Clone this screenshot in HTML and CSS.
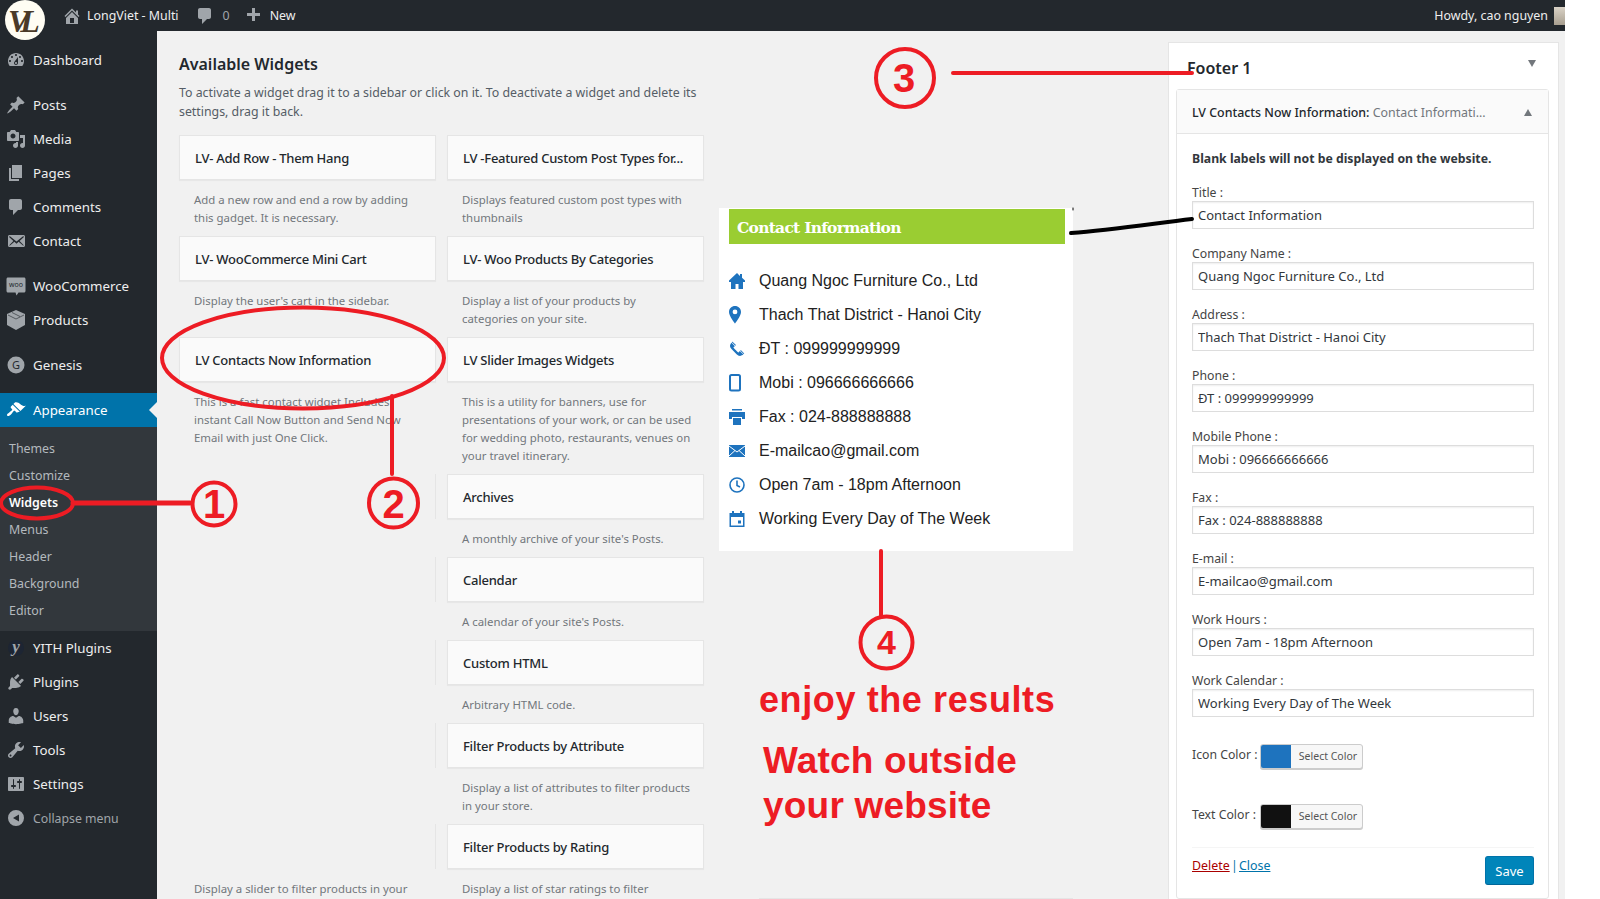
FILE: index.html
```html
<!DOCTYPE html>
<html lang="en">
<head>
    <meta charset="UTF-8">
    <meta name="viewport" content="width=device-width, initial-scale=1.0">
    <title>Widgets - LongViet - Multi</title>
    <link rel="stylesheet" href="styles.css">
</head>
<body>
<div class="page">
    <!-- top admin bar -->
    <header class="adminbar">
        <div class="bar-left">
            <a class="bar-item site-name">
                <svg class="bar-icon" viewBox="0 0 20 20"><path fill-rule="evenodd" d="M16 8.5l1.53 1.53-1.06 1.06L10 4.62l-6.47 6.47-1.06-1.06L10 2.5l4 4v-2h2v4zm-6-2.46l6 5.99V18H4v-5.97zM12 17v-5H8v5h4z"/></svg>
                LongViet - Multi
            </a>
            <a class="bar-item comments-count">
                <svg class="bar-icon" viewBox="0 0 20 20"><path d="M5 2h9c1.1 0 2 .9 2 2v7c0 1.1-.9 2-2 2h-2l-5 5v-5H5c-1.1 0-2-.9-2-2V4c0-1.1.9-2 2-2z"/></svg>
                <span>0</span>
            </a>
            <a class="bar-item new-item">
                <svg class="bar-icon" viewBox="0 0 20 20"><path d="M17 7v3h-5v5H9v-5H4V7h5V2h3v5h5z"/></svg>
                New
            </a>
        </div>
        <div class="bar-right">
            <span>Howdy, cao nguyen</span>
            <span class="avatar"></span>
        </div>
    </header>

    <div class="layout">
        <!-- left menu -->
        <nav class="sidemenu">
            <a class="menu-item"><svg class="menu-icon" viewBox="0 0 20 20"><path fill-rule="evenodd" d="M3.76 16h12.48c1.1-1.37 1.76-3.11 1.76-5 0-4.42-3.58-8-8-8s-8 3.58-8 8c0 1.89.66 3.63 1.76 5zM10 4c.55 0 1 .45 1 1s-.45 1-1 1-1-.45-1-1 .45-1 1-1zM6 6c.55 0 1 .45 1 1s-.45 1-1 1-1-.45-1-1 .45-1 1-1zm8 0c.55 0 1 .45 1 1s-.45 1-1 1-1-.45-1-1 .45-1 1-1zm-5.37 5.55L12 7v6c0 1.1-.9 2-2 2s-2-.9-2-2c0-.57.24-1.08.63-1.45zM4 10c.55 0 1 .45 1 1s-.45 1-1 1-1-.45-1-1 .45-1 1-1zm12 0c.55 0 1 .45 1 1s-.45 1-1 1-1-.45-1-1 .45-1 1-1zm-5 3c0-.55-.45-1-1-1s-1 .45-1 1 .45 1 1 1 1-.45 1-1z"/></svg>Dashboard</a>

            <div class="menu-sep"></div>
            <a class="menu-item"><svg class="menu-icon" viewBox="0 0 20 20"><path d="M10.44 3.02l1.82-1.82 6.36 6.35-1.83 1.82c-1.05-.68-2.48-.57-3.41.36l-.75.75c-.92.93-1.04 2.35-.35 3.41l-1.83 1.82-2.41-2.41-2.8 2.79c-.42.42-3.38 2.71-3.8 2.29s1.86-3.39 2.28-3.81l2.79-2.79L4.1 9.36l1.83-1.82c1.05.69 2.48.57 3.4-.36l.75-.75c.93-.92 1.05-2.35.36-3.41z"/></svg>Posts</a>
            <a class="menu-item"><svg class="menu-icon" viewBox="0 0 20 20"><path fill-rule="evenodd" d="M13 11V4c0-.55-.45-1-1-1h-1.67L9 1H5L3.67 3H2c-.55 0-1 .45-1 1v7c0 .55.45 1 1 1h10c.55 0 1-.45 1-1zM7 4.5c1.38 0 2.5 1.12 2.5 2.5S8.38 9.5 7 9.5 4.5 8.38 4.5 7 5.62 4.5 7 4.5zM14 6h5v10.5c0 1.38-1.12 2.5-2.5 2.5S14 17.88 14 16.5s1.12-2.5 2.5-2.5c.17 0 .34.02.5.05V9h-3V6zm-4 8.05V13h2v3.5c0 1.38-1.12 2.5-2.5 2.5S7 17.88 7 16.5 8.12 14 9.5 14c.17 0 .34.02.5.05z"/></svg>Media</a>
            <a class="menu-item"><svg class="menu-icon" viewBox="0 0 20 20"><path d="M6 15V2h10v13H6zm-1 1h8v2H3V5h2v11z"/></svg>Pages</a>
            <a class="menu-item"><svg class="menu-icon" viewBox="0 0 20 20"><path d="M5 2h9c1.1 0 2 .9 2 2v7c0 1.1-.9 2-2 2h-2l-5 5v-5H5c-1.1 0-2-.9-2-2V4c0-1.1.9-2 2-2z"/></svg>Comments</a>
            <a class="menu-item"><svg class="menu-icon" viewBox="0 0 20 20"><path fill-rule="evenodd" d="M19 14.5v-9c0-.83-.67-1.5-1.5-1.5H3.49c-.83 0-1.5.67-1.5 1.5v9c0 .83.67 1.5 1.5 1.5H17.5c.83 0 1.5-.67 1.5-1.5zm-1.31-9.11c.33.33.15.67-.03.84L13.6 9.95l3.9 4.06c.12.14.2.36.06.51-.13.16-.43.15-.56.05l-4.37-3.73-2.14 1.95-2.13-1.95-4.37 3.73c-.13.1-.43.11-.56-.05-.14-.15-.06-.37.06-.51l3.9-4.06-4.06-3.72c-.18-.17-.36-.51-.03-.84s.67-.17.95.07l6.24 5.04 6.25-5.04c.28-.24.62-.4.95-.07z"/></svg>Contact</a>

            <div class="menu-sep"></div>
            <a class="menu-item"><svg class="menu-icon" viewBox="0 0 20 20"><path d="M2 1.5h16c.8 0 1.5.7 1.5 1.5v12c0 .8-.7 1.500-1.500 1.500h-5.500l-2 3-1-3H2c-.8 0-1.500-.7-1.500-1.500V3c0-.8.7-1.500 1.500-1.500z"/><text class="woo-mark" x="10" y="11">woo</text></svg>WooCommerce</a>
            <a class="menu-item"><svg class="menu-icon" viewBox="0 0 20 20"><path d="M10 0l9 4v11l-9 5-9-5V4z"/><path class="box-line" d="M2 5l8 4 8-4M6 2.500l8 4"/></svg>Products</a>

            <div class="menu-sep"></div>
            <a class="menu-item"><svg class="menu-icon" viewBox="0 0 20 20"><circle cx="10" cy="10" r="8.500"/><text class="genesis-mark" x="10" y="14">G</text></svg>Genesis</a>

            <div class="menu-sep"></div>
            <a class="menu-item current"><svg class="menu-icon" viewBox="0 0 20 20"><path d="M14.48 11.06L7.41 3.99l1.5-1.5c.5-.56 2.3-.47 3.51.32 1.21.8 1.43 1.28 2.91 2.1 1.18.64 2.45 1.26 4.45.85zm-.71.71L6.7 4.7 4.93 6.47c-.39.39-.39 1.02 0 1.41l1.06 1.06c.39.39.39 1.03 0 1.42-.6.6-1.43 1.11-2.21 1.69-.35.26-.7.53-1.01.84C1.43 13.23.4 14.89 1.3 15.79c.9.89 2.55-.13 3.88-1.47.31-.31.58-.66.85-1.01.57-.78 1.08-1.61 1.69-2.21.39-.39 1.02-.39 1.41 0l1.06 1.06c.39.39 1.02.39 1.41 0z"/></svg>Appearance</a>
            <div class="submenu">
                <a>Themes</a>
                <a>Customize</a>
                <a class="sub-current">Widgets</a>
                <a>Menus</a>
                <a>Header</a>
                <a>Background</a>
                <a>Editor</a>
            </div>

            <a class="menu-item"><svg class="menu-icon" viewBox="0 0 20 20"><circle class="yith-bg" cx="10" cy="10" r="8"/><text class="yith-mark" x="10" y="14">y</text></svg>YITH Plugins</a>
            <a class="menu-item"><svg class="menu-icon" viewBox="0 0 20 20"><path d="M13.11 4.36L9.87 7.6 8 5.73l3.24-3.24c.35-.34 1.05-.2 1.56.32.52.51.66 1.21.31 1.55zm-8 1.77l.91-1.12 9.01 9.01-1.19.84c-.71.71-2.63 1.16-3.82 1.16H6.14L4.9 17.26c-.59.59-1.54.59-2.12 0-.59-.58-.59-1.53 0-2.12l1.24-1.24v-3.88c0-1.13.4-3.19 1.09-3.89zm7.26 3.97l3.24-3.24c.34-.35 1.04-.21 1.55.31.52.51.66 1.21.31 1.55l-3.24 3.25z"/></svg>Plugins</a>
            <a class="menu-item"><svg class="menu-icon" viewBox="0 0 20 20"><path d="M10 9.25c-2.27 0-2.73-3.44-2.73-3.44C7 4.02 7.82 2 9.97 2c2.16 0 2.98 2.02 2.71 3.81 0 0-.41 3.44-2.68 3.44zm0 2.57L12.72 10c2.39 0 4.52 2.33 4.52 4.53v2.49s-3.65 1.13-7.24 1.13c-3.65 0-7.24-1.13-7.24-1.13v-2.49c0-2.25 1.94-4.48 4.47-4.48z"/></svg>Users</a>
            <a class="menu-item"><svg class="menu-icon" viewBox="0 0 20 20"><path fill-rule="evenodd" d="M16.68 9.77c-1.34 1.34-3.3 1.67-4.95.99l-5.41 6.52c-.99.99-2.59.99-3.58 0s-.99-2.59 0-3.57l6.52-5.42c-.68-1.65-.35-3.61.99-4.95 1.28-1.28 3.12-1.62 4.72-1.06l-2.89 2.89 2.82 2.82 2.86-2.87c.53 1.58.18 3.39-1.08 4.65zM3.81 16.21c.4.39 1.04.39 1.43 0 .4-.4.4-1.04 0-1.43-.39-.4-1.03-.4-1.43 0-.39.39-.39 1.03 0 1.43z"/></svg>Tools</a>
            <a class="menu-item"><svg class="menu-icon" viewBox="0 0 20 20"><path fill-rule="evenodd" d="M18 16V4c0-.55-.45-1-1-1H3c-.55 0-1 .45-1 1v12c0 .55.45 1 1 1h14c.55 0 1-.45 1-1zM8 11h1c.55 0 1 .45 1 1s-.45 1-1 1H8v1.5c0 .28-.22.5-.5.5s-.5-.22-.5-.5V13H6c-.55 0-1-.45-1-1s.45-1 1-1h1V5.500c0-.28.22-.5.5-.5s.5.22.5.5V11zm5-2h-1c-.55 0-1-.45-1-1s.45-1 1-1h1V5.500c0-.28.22-.5.5-.5s.5.22.5.5V7h1c.55 0 1 .45 1 1s-.45 1-1 1h-1v5.500c0 .28-.22.5-.5.5s-.5-.22-.5-.5V9z"/></svg>Settings</a>
            <a class="menu-item collapse"><svg class="menu-icon" viewBox="0 0 20 20"><path fill-rule="evenodd" d="M10 2a8 8 0 1 1 0 16 8 8 0 0 1 0-16zm3 4.500L7 10l6 3.500z"/></svg>Collapse menu</a>
        </nav>

        <main class="content">
            <!-- available widgets -->
            <section class="available">
                <h2>Available Widgets</h2>
                <p class="intro">To activate a widget drag it to a sidebar or click on it. To deactivate a widget and delete its settings, drag it back.</p>
                <div class="widget-rows">
                    <div class="widget-row">
                        <div class="widget"><div class="widget-card">LV- Add Row - Them Hang</div><p>Add a new row and end a row by adding this gadget. It is necessary.</p></div>
                        <div class="widget"><div class="widget-card">LV -Featured Custom Post Types for...</div><p>Displays featured custom post types with thumbnails</p></div>
                    </div>
                    <div class="widget-row">
                        <div class="widget"><div class="widget-card">LV- WooCommerce Mini Cart</div><p>Display the user's cart in the sidebar.</p></div>
                        <div class="widget"><div class="widget-card">LV- Woo Products By Categories</div><p>Display a list of your products by categories on your site.</p></div>
                    </div>
                    <div class="widget-row">
                        <div class="widget"><div class="widget-card">LV Contacts Now Information</div><p>This is a fast contact widget Includes instant Call Now Button and Send Now Email with just One Click.</p></div>
                        <div class="widget"><div class="widget-card">LV Slider Images Widgets</div><p>This is a utility for banners, use for presentations of your work, or can be used for wedding photo, restaurants, venues on your travel itinerary.</p></div>
                    </div>
                    <div class="widget-row">
                        <div class="widget"><div class="widget-card ghost"></div></div>
                        <div class="widget"><div class="widget-card">Archives</div><p>A monthly archive of your site's Posts.</p></div>
                    </div>
                    <div class="widget-row">
                        <div class="widget"><div class="widget-card ghost"></div></div>
                        <div class="widget"><div class="widget-card">Calendar</div><p>A calendar of your site's Posts.</p></div>
                    </div>
                    <div class="widget-row">
                        <div class="widget"><div class="widget-card ghost"></div></div>
                        <div class="widget"><div class="widget-card">Custom HTML</div><p>Arbitrary HTML code.</p></div>
                    </div>
                    <div class="widget-row">
                        <div class="widget"><div class="widget-card ghost"></div></div>
                        <div class="widget"><div class="widget-card">Filter Products by Attribute</div><p>Display a list of attributes to filter products in your store.</p></div>
                    </div>
                    <div class="widget-row">
                        <div class="widget"><div class="widget-card ghost"></div><p>Display a slider to filter products in your</p></div>
                        <div class="widget"><div class="widget-card">Filter Products by Rating</div><p>Display a list of star ratings to filter</p></div>
                    </div>
                </div>
            </section>

            <!-- front end result -->
            <section class="result">
                <div class="contact-box">
                    <h3>Contact Information</h3>
                    <ul class="contact-list">
                        <li><svg class="contact-icon" viewBox="0 0 16 18"><path d="M8 1L0 8.500V10h2v7h4.500v-5h3v5H14v-7h2V8.500l-3-2.700V2h-2v2z"/></svg>Quang Ngoc Furniture Co., Ltd</li>
                        <li><svg class="contact-icon" viewBox="0 0 16 18"><path fill-rule="evenodd" d="M6 0C2.700 0 0 2.600 0 5.900 0 10 6 17.500 6 17.500s6-7.500 6-11.600C12 2.600 9.300 0 6 0zm0 8.300a2.400 2.400 0 1 1 0-4.800 2.400 2.400 0 0 1 0 4.800z"/></svg>Thach That District - Hanoi City</li>
                        <li><svg class="contact-icon" viewBox="0 0 20 20"><path d="M12.060 6l-.21-.2c-.52-.54-.43-.79.08-1.300l2.720-2.750c.81-.82.96-1.210 1.730-.48l.21.2zm.53.45l4.400-4.400c.7.94 2.340 3.470 1.530 5.340-.73 1.670-1.090 1.750-2 3-1.850 2.110-4.180 4.370-6 6.070-1.260.91-1.310 1.330-3 2-1.800.71-4.400-.89-5.380-1.560l4.400-4.400 1.180 1.620c.34.46 1.200-.06 1.800-.66 1.040-1.050 3.180-3.180 4-4.070.59-.59 1.120-1.450.66-1.800zM1.570 16.500l-.21-.21c-.68-.74-.29-.9.52-1.700l2.740-2.720c.51-.49.75-.6 1.270-.11l.2.21z" transform="matrix(-1 0 0 1 20 0)"/></svg>ĐT : 099999999999</li>
                        <li><svg class="contact-icon" viewBox="0 0 16 18"><rect class="line" x="1" y="1" width="10" height="15.500" rx="1.500"/></svg>Mobi : 096666666666</li>
                        <li><svg class="contact-icon" viewBox="0 0 16 18"><path d="M3 1h10v1.500H3zM0 4h16v7h-3V9H3v2H0zM4 10h8v7H4z"/></svg>Fax : 024-888888888</li>
                        <li><svg class="contact-icon" viewBox="0 0 16 18"><rect y="3" width="16" height="12"/><path class="cut" d="M0 4l8 6 8-6M0 14l6-5.500M16 14l-6-5.500"/></svg>E-mailcao@gmail.com</li>
                        <li><svg class="contact-icon" viewBox="0 0 16 18"><circle class="line thin" cx="8" cy="9" r="7"/><path class="line thin" d="M8 4.500V9.500l3 1.500"/></svg>Open 7am - 18pm Afternoon</li>
                        <li><svg class="contact-icon" viewBox="0 0 16 18"><path d="M3 1h2v2h6V1h2v2h2.500v14H.5V3H3z"/><rect class="hole" x="2" y="7" width="12" height="8.500"/><rect x="9" y="10.500" width="3" height="3"/></svg>Working Every Day of The Week</li>
                    </ul>
                </div>
                <p class="enjoy">enjoy the results</p>
                <p class="watch">Watch outside<br>your website</p>
                <div class="bottom-rule"></div>
            </section>

            <!-- footer sidebar -->
            <section class="sidebar-box">
                <div class="sidebar-head">
                    <h2>Footer 1</h2>
                    <span class="arrow-down"></span>
                </div>
                <div class="open-widget">
                    <div class="open-title">
                        <span>LV Contacts Now Information: <em>Contact Informati...</em></span>
                        <span class="arrow-up"></span>
                    </div>
                    <form class="widget-form">
                        <p class="form-note">Blank labels will not be displayed on the website.</p>
                        <label class="field">Title :<input type="text" value="Contact Information"></label>
                        <label class="field">Company Name :<input type="text" value="Quang Ngoc Furniture Co., Ltd"></label>
                        <label class="field">Address :<input type="text" value="Thach That District - Hanoi City"></label>
                        <label class="field">Phone :<input type="text" value="ĐT : 099999999999"></label>
                        <label class="field">Mobile Phone :<input type="text" value="Mobi : 096666666666"></label>
                        <label class="field">Fax :<input type="text" value="Fax : 024-888888888"></label>
                        <label class="field">E-mail :<input type="text" value="E-mailcao@gmail.com"></label>
                        <label class="field">Work Hours :<input type="text" value="Open 7am - 18pm Afternoon"></label>
                        <label class="field">Work Calendar :<input type="text" value="Working Every Day of The Week"></label>

                        <div class="color-rows">
                            <div class="color-row">
                                <span class="color-label">Icon Color :</span>
                                <button type="button" class="color-btn"><span class="swatch swatch-blue"></span><span class="color-text">Select Color</span></button>
                            </div>
                            <div class="color-row">
                                <span class="color-label">Text Color :</span>
                                <button type="button" class="color-btn"><span class="swatch swatch-black"></span><span class="color-text">Select Color</span></button>
                            </div>
                        </div>

                        <div class="form-actions">
                            <div class="form-links"><a class="link-delete">Delete</a> <span class="link-sep">|</span> <a class="link-close">Close</a></div>
                            <button type="button" class="save-btn">Save</button>
                        </div>
                    </form>
                </div>
            </section>
        </main>
    </div>

    <!-- site logo sits over the bar and the menu -->
    <svg class="logo" viewBox="0 0 40 40">
        <circle class="logo-disc" cx="20" cy="20" r="20"/>
        <text class="logo-mark" x="3" y="32">VL</text>
    </svg>

    <!-- hand drawn notes on top of the screenshot -->
    <svg class="notes" viewBox="0 0 1600 899">
        <ellipse class="note" cx="37" cy="503" rx="36" ry="15.500"/>
        <path class="note thick" d="M73 503H190"/>
        <circle class="note" cx="214" cy="504" r="21.500"/>
        <text class="note-num" x="214" y="518">1</text>

        <ellipse class="note" cx="303" cy="358" rx="141" ry="50.500"/>
        <path class="note" d="M392 396V474"/>
        <circle class="note" cx="393.500" cy="503" r="24.500"/>
        <text class="note-num" x="393.500" y="518">2</text>

        <circle class="note" cx="905" cy="78" r="29"/>
        <text class="note-num" x="904" y="92">3</text>
        <path class="note" d="M953 73H1192"/>

        <path class="note black" d="M1071 233C1110 230 1150 224 1192 219"/>
        <path class="note black dot" d="M1073 208V210"/>

        <path class="note" d="M881 551V617"/>
        <circle class="note" cx="886.500" cy="642.500" r="26"/>
        <text class="note-num small" x="886.500" y="654">4</text>
    </svg>
</div>
</body>
</html>
```

FILE: styles.css
```css
* {
    box-sizing: border-box;
}

body {
    margin: 0;
    background-color: #fff;
    font-family: "Noto Sans", "Open Sans", sans-serif;
    font-size: 12.4px;
    color: #444;
}

a {
    text-decoration: none;
}

p,
h2,
h3,
ul {
    margin: 0;
    padding: 0;
}

.page {
    position: relative;
    width: 1565px;
    height: 899px;
    overflow: hidden;
    background-color: #f1f1f1;
}

/* admin bar */
.adminbar {
    display: flex;
    justify-content: space-between;
    height: 31px;
    padding-left: 62px;
    background-color: #23282d;
    color: #eee;
    line-height: 31px;
}

.bar-left,
.bar-right,
.bar-item {
    display: flex;
    align-items: center;
}

.bar-icon {
    width: 20px;
    height: 20px;
    fill: #a0a5aa;
}

.site-name {
    gap: 5px;
    margin-right: 16px;
}

.comments-count {
    gap: 8px;
    margin-right: 13px;
    color: #a0a5aa;
}

.new-item {
    gap: 7px;
}

.bar-right {
    gap: 6px;
}

.avatar {
    width: 11px;
    height: 18px;
    background: linear-gradient(#d9d2c6, #a89f90);
}

.layout {
    display: grid;
    grid-template-columns: 157px 1fr;
    height: 868px;
}

/* left menu */
.sidemenu {
    padding-top: 12px;
    background-color: #23282d;
}

.menu-item {
    display: flex;
    align-items: center;
    gap: 7px;
    position: relative;
    height: 34px;
    padding-left: 6px;
    font-size: 13.3px;
    color: #eee;
}

.menu-icon {
    width: 20px;
    height: 20px;
    flex-shrink: 0;
    fill: #a0a5aa;
}

.menu-sep {
    height: 11px;
}

.menu-item.current {
    background-color: #0073aa;
    color: #fff;
}

.menu-item.current .menu-icon {
    fill: #fff;
}

.menu-item.current::after {
    content: "";
    position: absolute;
    right: 0;
    top: 9px;
    border: 8px solid transparent;
    border-right-color: #f1f1f1;
    border-left-width: 0;
}

.menu-item.collapse {
    font-size: 12.3px;
    color: #a0a5aa;
}

.woo-mark,
.genesis-mark,
.yith-mark {
    text-anchor: middle;
    fill: #23282d;
}

.woo-mark {
    font-size: 7px;
}

.genesis-mark {
    font-size: 11px;
}

.yith-bg {
    fill: #1d2533;
}

.yith-mark {
    font-family: "Liberation Serif", serif;
    font-size: 17px;
    font-weight: bold;
    font-style: italic;
    fill: #a0a5aa;
}

.box-line {
    fill: none;
    stroke: #23282d;
    stroke-width: 0.6;
}

.submenu {
    padding: 8px 0 7px;
    background-color: #32373c;
}

.submenu a {
    display: block;
    height: 27px;
    padding-left: 9px;
    line-height: 27px;
    color: #b4b9be;
}

.submenu a.sub-current {
    font-weight: 600;
    color: #fff;
}

/* content */
.content {
    display: flex;
    padding-left: 22px;
    height: 868px;
    overflow: hidden;
}

.available {
    flex: none;
    width: 525px;
    padding-top: 21px;
}

.available h2 {
    font-size: 16px;
    font-weight: 600;
    line-height: 24px;
    color: #23282d;
}

.intro {
    margin-top: 7px;
    font-size: 12.35px;
    line-height: 19px;
    color: #555d66;
}

.widget-rows {
    margin-top: 14px;
}

.widget-row {
    display: grid;
    grid-template-columns: 257px 257px;
    column-gap: 11px;
}

.widget-card {
    height: 45px;
    padding: 0 15px;
    border: 1px solid #e5e5e5;
    background-color: #fafafa;
    box-shadow: 0 1px 1px rgba(0, 0, 0, 0.04);
    font-size: 13px;
    font-weight: 500;
    letter-spacing: -0.24px;
    line-height: 45px;
    color: #23282d;
    white-space: nowrap;
}

.widget-card.ghost {
    border-width: 0 1px 0 0;
    background: none;
    box-shadow: none;
}

.widget p {
    margin: 11px 0 9px;
    padding: 0 11px 0 15px;
    font-size: 11.4px;
    line-height: 18px;
    color: #72777c;
}

/* front end result */
.result {
    flex: none;
    display: flex;
    flex-direction: column;
    width: 354px;
    margin-left: 15px;
    padding-top: 177px;
}

.contact-box {
    height: 343px;
    padding: 1px 8px 0 10px;
    background-color: #fff;
}

.contact-box h3 {
    height: 35px;
    padding-left: 8px;
    background-color: #9acd32;
    font-family: "DejaVu Serif", serif;
    font-size: 15.5px;
    font-weight: bold;
    letter-spacing: -0.75px;
    line-height: 37px;
    color: #fff;
}

.contact-list {
    padding-top: 20px;
    list-style: none;
    font-family: "Liberation Sans", Arial, sans-serif;
    font-size: 16px;
    color: #222;
}

.contact-list li {
    display: flex;
    align-items: center;
    height: 34px;
}

.contact-icon {
    flex: none;
    width: 16px;
    height: 18px;
    margin-right: 14px;
    fill: #1e73be;
}

.contact-icon .line {
    fill: none;
    stroke: #1e73be;
    stroke-width: 2;
}

.contact-icon .line.thin {
    stroke-width: 1.600;
}

.contact-icon .cut {
    fill: none;
    stroke: #fff;
    stroke-width: 1;
}

.contact-icon .hole {
    fill: #fff;
}

.enjoy,
.watch {
    font-family: "Liberation Sans", Arial, sans-serif;
    font-weight: bold;
    color: #ed1c24;
}

.enjoy {
    margin: 126px 0 0 40px;
    font-size: 36px;
    line-height: 46px;
    letter-spacing: 0.6px;
}

.watch {
    margin: 15px 0 0 44px;
    font-size: 37px;
    line-height: 45px;
    letter-spacing: 0.2px;
}

.bottom-rule {
    margin: auto 0 0 40px;
    border-top: 1px solid #e5e5e5;
}

/* footer sidebar */
.sidebar-box {
    flex: none;
    width: 391px;
    margin: 11px 0 0 95px;
    padding: 0 9px 0 7px;
    border: 1px solid #e5e5e5;
    border-bottom: 0;
    background-color: #fff;
}

.sidebar-head {
    display: flex;
    justify-content: space-between;
    height: 46px;
    padding: 13px 13px 0 11px;
}

.sidebar-head h2 {
    font-size: 16px;
    font-weight: 600;
    line-height: 24px;
    color: #23282d;
}

.arrow-down,
.arrow-up {
    border: 4px solid transparent;
    border-width: 7px 4px;
}

.arrow-down {
    margin-top: 4px;
    height: 0;
    border-top-color: #72777c;
    border-bottom-width: 0;
}

.arrow-up {
    height: 0;
    border-bottom-color: #72777c;
    border-top-width: 0;
    margin-right: 16px;
}

.open-widget {
    border: 1px solid #e5e5e5;
    border-radius: 3px;
    height: 810px;
}

.open-title {
    display: flex;
    justify-content: space-between;
    align-items: center;
    height: 44px;
    padding: 2px 0 0 15px;
    border-bottom: 1px solid #e5e5e5;
    background-color: #fafafa;
    font-weight: 500;
    color: #23282d;
}

.open-title em {
    font-style: normal;
    font-weight: 400;
    color: #72777c;
}

.widget-form {
    padding: 16px 14px 0 15px;
}

.form-note {
    margin-bottom: 15px;
    font-size: 12.25px;
    font-weight: bold;
    line-height: 18px;
    color: #32373c;
}

.field {
    display: block;
    height: 61px;
    font-size: 12.25px;
    line-height: 20px;
}

.field input {
    display: block;
    width: 100%;
    height: 28px;
    margin-top: -2px;
    padding: 0 5px;
    border: 1px solid #ddd;
    box-shadow: inset 0 1px 2px rgba(0, 0, 0, 0.07);
    font-family: inherit;
    font-size: 13px;
    color: #32373c;
}

.color-rows {
    margin-top: 12px;
}

.color-row {
    display: flex;
    align-items: center;
    height: 25px;
    margin-bottom: 35px;
}

.color-label {
    width: 68px;
    padding-bottom: 4px;
    font-size: 12.25px;
}

.color-btn {
    display: flex;
    width: 103px;
    height: 25px;
    padding: 0;
    border: 1px solid #ccc;
    border-radius: 3px;
    background-color: #f7f7f7;
    box-shadow: 0 1px 0 #ccc;
    overflow: hidden;
    font-family: inherit;
}

.swatch {
    width: 30px;
    height: 100%;
}

.swatch-blue {
    background-color: #1e73be;
}

.swatch-black {
    background-color: #111;
}

.color-text {
    flex: 1;
    padding-left: 3px;
    font-size: 10.5px;
    line-height: 23px;
    color: #555;
}

.form-actions {
    display: flex;
    justify-content: space-between;
    align-items: flex-start;
    margin-top: -17px;
    padding-top: 8px;
    border-top: 1px solid #f5f5f5;
}

.form-links {
    padding-top: 1px;
    word-spacing: -2px;
}

.link-delete {
    color: #a00;
    text-decoration: underline;
}

.link-sep {
    color: #0073aa;
}

.link-close {
    color: #0073aa;
    text-decoration: underline;
}

.save-btn {
    width: 49px;
    height: 29px;
    padding: 0;
    border: 1px solid #0073aa;
    border-bottom-color: #006799;
    border-radius: 3px;
    background-color: #0085ba;
    font-family: inherit;
    font-size: 13px;
    color: #fff;
}

/* overlays */
.logo {
    position: absolute;
    left: 5px;
    top: 0;
    width: 40px;
    height: 40px;
}

.logo-disc {
    fill: #fffdf3;
}

.logo-mark {
    font-family: "Liberation Serif", serif;
    font-size: 32px;
    font-weight: bold;
    font-style: italic;
    letter-spacing: -9px;
    fill: #4a3a28;
}

.notes {
    position: absolute;
    left: 0;
    top: 0;
    width: 1600px;
    height: 899px;
    pointer-events: none;
}

.note {
    fill: none;
    stroke: #ed1c24;
    stroke-width: 4;
    stroke-linecap: round;
}

.note.thick {
    stroke-width: 5;
}

.note.black {
    stroke: #000;
}

.note.black.dot {
    stroke-width: 1;
}

.note-num {
    font-family: "Liberation Sans", Arial, sans-serif;
    font-size: 40px;
    font-weight: bold;
    text-anchor: middle;
    fill: #ed1c24;
}

.note-num.small {
    font-size: 34px;
}
```
